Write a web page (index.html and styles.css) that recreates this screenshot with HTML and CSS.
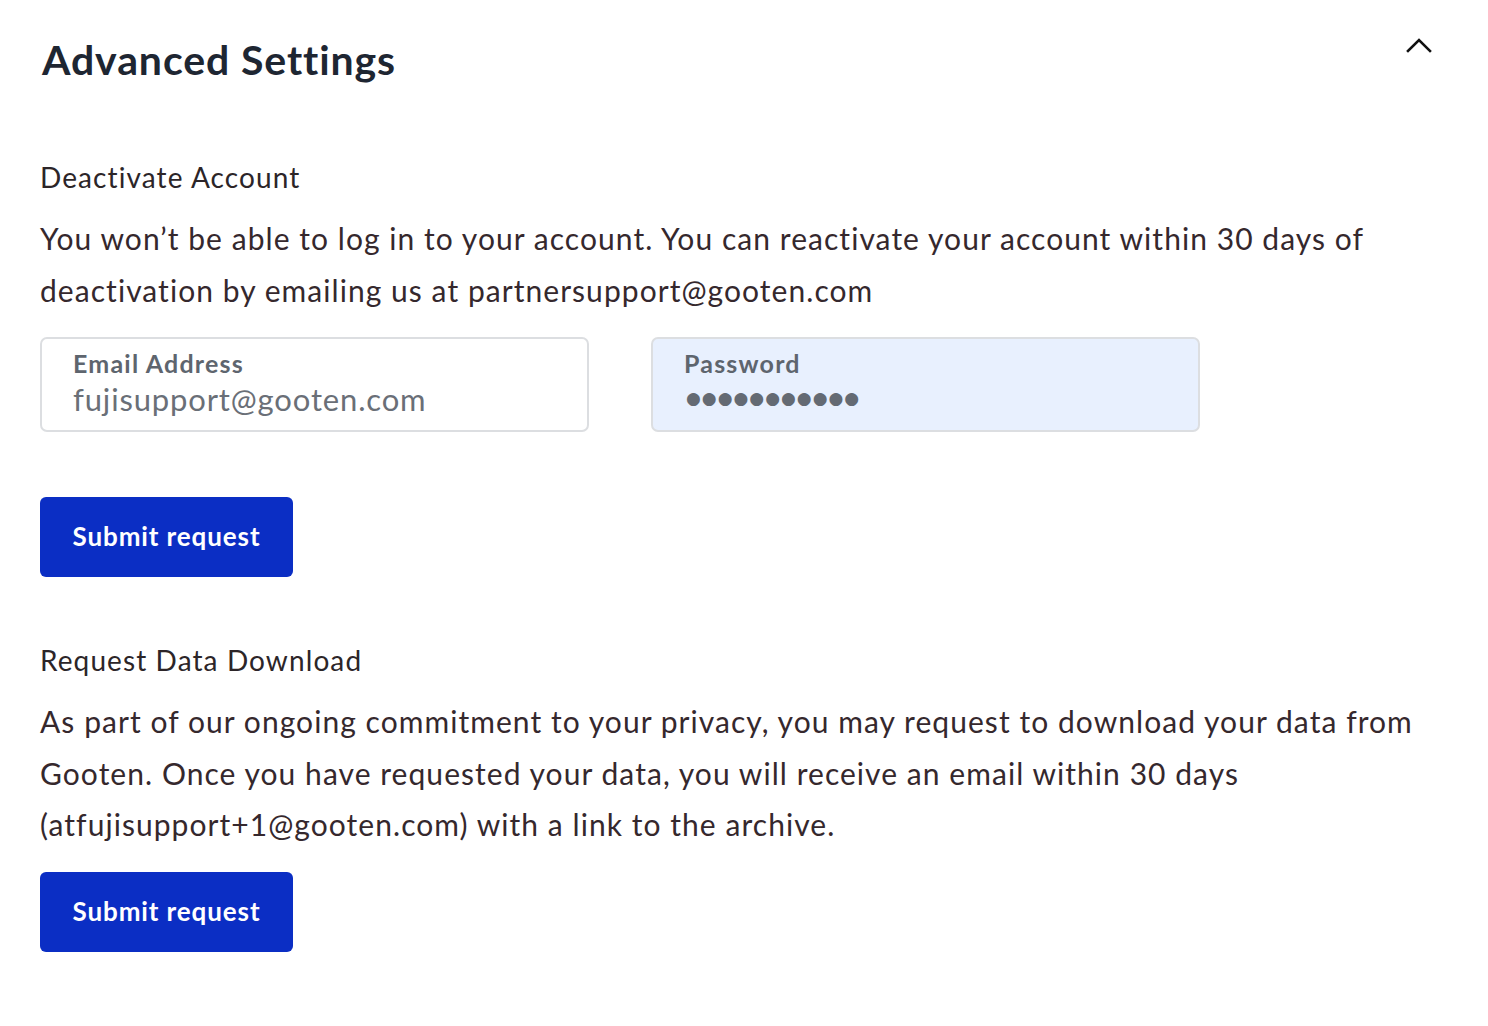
FILE: index.html
```html
<!DOCTYPE html>
<html lang="en">
<head>
  <meta charset="UTF-8">
  <meta name="viewport" content="width=device-width, initial-scale=1.0"/>
  <title>Advanced Settings</title>
  <link rel="stylesheet" href="styles.css">
</head>
<body>
  <div class="settings">
    <!-- header -->
    <div class="settings-header">
      <h1>Advanced Settings</h1>
      <svg class="chevron" width="26" height="16" viewBox="0 0 26 16">
        <path d="M2 14 L13 3 L24 14" fill="none" stroke="#111" stroke-width="2.6" stroke-linecap="square"/>
      </svg>
    </div>

    <!-- deactivate -->
    <div class="section">
      <h2>Deactivate Account</h2>
      <p>You won’t be able to log in to your account. You can reactivate your account within 30 days of deactivation by emailing us at partnersupport@gooten.com</p>
      <div class="fields">
        <div class="field">
          <span class="field-label">Email Address</span>
          <span class="field-value">fujisupport@gooten.com</span>
        </div>
        <div class="field autofill">
          <span class="field-label">Password</span>
          <span class="field-dots">●●●●●●●●●●●</span>
        </div>
      </div>
      <button class="btn">Submit request</button>
    </div>

    <!-- data download -->
    <div class="section">
      <h2>Request Data Download</h2>
      <p>As part of our ongoing commitment to your privacy, you may request to download your data from Gooten. Once you have requested your data, you will receive an email within 30 days (atfujisupport+1@gooten.com) with a link to the archive.</p>
      <button class="btn btn-tight">Submit request</button>
    </div>
  </div>
</body>
</html>
```

FILE: styles.css
```css
body {
  margin: 0;
  background: #fff;
  font-family: Lato, "Noto Sans", sans-serif;
}

.settings {
  padding: 30px 40px 40px 40px;
  width: 1390px;
}

.settings-header {
  display: flex;
  justify-content: space-between;
  align-items: flex-start;
}

.settings-header h1 {
  margin: 0;
  padding-left: 2px;
  font-size: 41px;
  font-weight: 700;
  letter-spacing: 0.9px;
  color: #1e2632;
  line-height: 60px;
}

.chevron {
  margin-top: 7px;
  margin-right: -2px;
}

.section {
  margin-top: 67px;
}

.section + .section {
  margin-top: 63px;
}

.section h2 {
  margin: 0;
  font-size: 28px;
  font-weight: 400;
  letter-spacing: 1.1px;
  color: #2c2528;
  line-height: 40px;
}

.section p {
  margin: 16px 0 0 0;
  font-size: 30px;
  line-height: 51.5px;
  letter-spacing: 1.05px;
  color: #35282d;
  max-width: 1390px;
}

.fields {
  display: flex;
  gap: 62px;
  margin-top: 21px;
}

.field {
  box-sizing: border-box;
  width: 549px;
  height: 95px;
  border: 2px solid #dcdee1;
  border-radius: 7px;
  padding: 9px 32px 0 31px;
  display: flex;
  flex-direction: column;
}

.field.autofill {
  background: #e8f0fe;
}

.field-label {
  font-size: 25px;
  font-weight: 700;
  letter-spacing: 1.2px;
  color: #5e656e;
  line-height: 30px;
}

.field-value {
  font-size: 31px;
  letter-spacing: 0.85px;
  color: #6a6f77;
  line-height: 42px;
}

.field-dots {
  font-family: "DejaVu Sans", sans-serif;
  font-size: 17px;
  color: #646a73;
  letter-spacing: 1px;
  line-height: 40px;
  padding-left: 2px;
}

.btn {
  display: block;
  margin-top: 65px;
  width: 253px;
  height: 80px;
  padding: 0 0 2px 0;
  background: #0b2ec4;
  color: #fff;
  border: none;
  border-radius: 6px;
  font-family: Lato, "Noto Sans", sans-serif;
  font-size: 26px;
  font-weight: 700;
  letter-spacing: 0.9px;
  cursor: pointer;
}

.btn-tight {
  margin-top: 21px;
}
```
